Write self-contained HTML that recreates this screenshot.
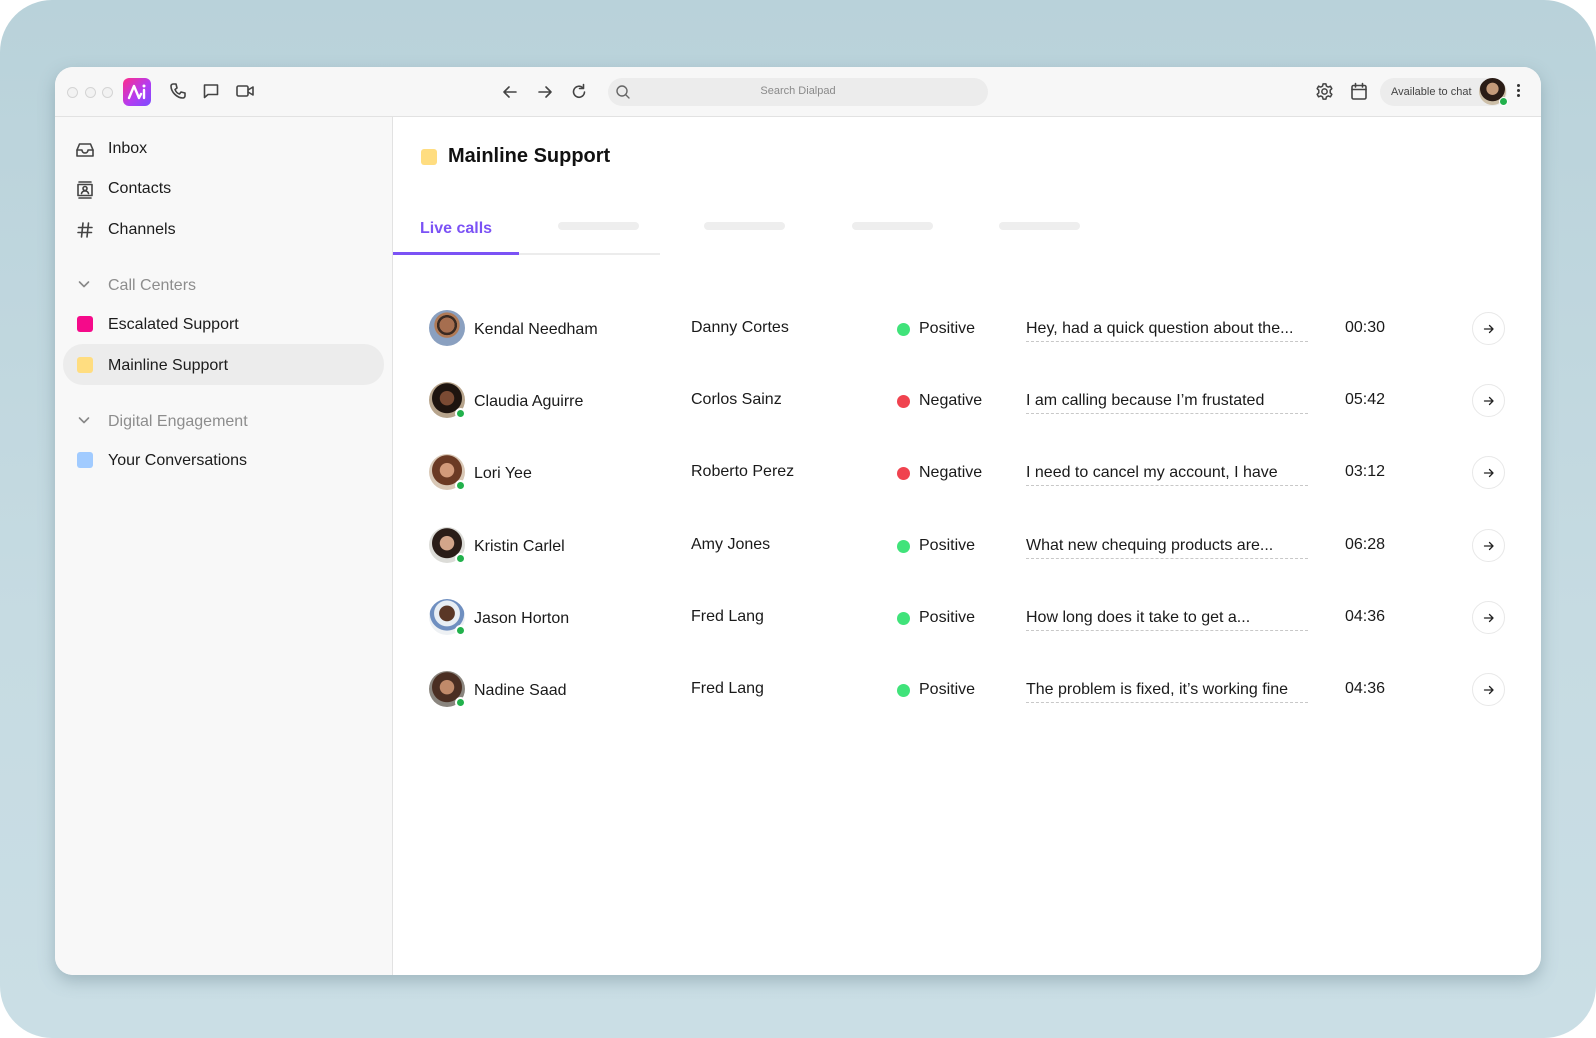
<!DOCTYPE html>
<html><head><meta charset="utf-8"><style>
*{margin:0;padding:0;box-sizing:border-box}
html,body{width:1596px;height:1038px;background:#fff;overflow:hidden;font-family:"Liberation Sans",sans-serif;color:#1a1a1a}
#bg{position:absolute;left:0;top:0;width:1596px;height:1038px;border-radius:52px;background:linear-gradient(180deg,#b9d2da 0%,#c6dbe2 60%,#cadee5 100%)}
#win{position:absolute;left:55px;top:67px;width:1486px;height:908px;border-radius:18px;background:#fff;overflow:hidden;box-shadow:0 6px 16px rgba(80,110,120,.35)}
#tb{position:absolute;left:0;top:0;width:100%;height:50px;background:#f7f7f7;border-bottom:1px solid #e2e2e2}
#side{position:absolute;left:0;top:50px;width:338px;bottom:0;background:#f8f8f8;border-right:1px solid #e2e2e2}
.a{position:absolute}
.tl{position:absolute;top:20px;width:11px;height:11px;border-radius:50%;border:1px solid #d4d4d4;background:#f2f2f2}
svg.i{position:absolute;fill:none;stroke:#444;stroke-width:1.6;stroke-linecap:round;stroke-linejoin:round}
.si{position:absolute;left:53px;font-size:16px;color:#1c1c1c}
.sq{position:absolute;left:22px;width:16px;height:16px;border-radius:3px}
.hd{color:#8d8d8d}
.row{position:absolute;left:0;width:100%;height:40px}
.av{position:absolute;left:374px;top:0;width:36px;height:36px;border-radius:50%}
.pd{position:absolute;right:-1px;bottom:-1px;width:11px;height:11px;border-radius:50%;background:#22b14c;border:2px solid #fff}
.t{position:absolute;font-size:16px;white-space:nowrap}
.dot{position:absolute;left:842px;top:13px;width:13px;height:13px;border-radius:50%}
.tr{position:absolute;left:971px;top:10px;width:282px;font-size:16px;padding-bottom:3px;border-bottom:1.5px dashed #c8c8c8;white-space:nowrap}
.arr{position:absolute;left:1417px;top:2px;width:33px;height:33px;border-radius:50%;border:1px solid #e8e8e8;background:#fff}
.ph{position:absolute;top:155px;width:81px;height:8px;border-radius:4px;background:#eeeeee}
</style></head><body>
<div id="bg"></div>
<div id="win">
 <div id="tb">
  <div class="tl" style="left:12px"></div><div class="tl" style="left:30px"></div><div class="tl" style="left:47px"></div>
  <div class="a" style="left:68px;top:11px;width:28px;height:28px;border-radius:6px;background:linear-gradient(135deg,#ff2d8a 0%,#b43cf0 55%,#7b4dff 100%)">
   <svg width="28" height="28" viewBox="0 0 28 28" style="position:absolute;left:0;top:0"><path d="M6 20 L11 8 L16 20 L18 16" stroke="#fff" stroke-width="2.4" fill="none" stroke-linecap="round" stroke-linejoin="round"/><path d="M21 12 V20" stroke="#fff" stroke-width="2.4" stroke-linecap="round"/><circle cx="21" cy="8" r="1.5" fill="#fff"/></svg>
  </div>
  <svg class="i" style="left:114px;top:15px" width="18" height="18" viewBox="0 0 18 18"><path d="M4 2 L7 2 L8 6 L6 7.5 C7 10 8.5 11.5 10.5 12 L12 10 L16 11 L16 14 C16 15 15 16 14 16 C8 16 2 10 2 4 C2 3 3 2 4 2Z"/></svg>
  <svg class="i" style="left:147px;top:15px" width="18" height="18" viewBox="0 0 18 18"><path d="M2.5 3 H15.5 V12.5 H6 L2.5 15.5 Z"/></svg>
  <svg class="i" style="left:180px;top:15px" width="20" height="18" viewBox="0 0 20 18"><rect x="2" y="4" width="11" height="10" rx="1.5"/><path d="M13 8 L18 5 V13 L13 10"/></svg>
  <svg class="i" style="left:446px;top:16px" width="18" height="18" viewBox="0 0 18 18"><path d="M15 9 H3 M8 4 L3 9 L8 14"/></svg>
  <svg class="i" style="left:481px;top:16px" width="18" height="18" viewBox="0 0 18 18"><path d="M3 9 H15 M10 4 L15 9 L10 14"/></svg>
  <svg class="i" style="left:514px;top:15px" width="20" height="20" viewBox="0 0 20 20"><path d="M15.5 10 A5.5 5.5 0 1 1 13.5 5.5"/><path d="M14.5 2.5 V6.5 H10.5"/></svg>
  <div class="a" style="left:553px;top:11px;width:380px;height:28px;border-radius:14px;background:#ececec">
   <svg class="i" style="left:7px;top:6px;stroke:#666;stroke-width:1.4" width="16" height="16" viewBox="0 0 16 16"><circle cx="7" cy="7" r="5"/><path d="M11 11 L14 14"/></svg>
   <div class="a" style="left:0;width:100%;top:7px;text-align:center;font-size:11px;color:#8a8a8a">Search Dialpad</div>
  </div>
  <svg class="i" style="left:1260px;top:15px" width="19" height="19" viewBox="0 0 20 20"><circle cx="10" cy="10" r="2.8"/><path d="M8.5 2 H11.5 L12 4.3 L14 5.3 L16.2 4.4 L17.7 7 L16 8.6 V11.4 L17.7 13 L16.2 15.6 L14 14.7 L12 15.7 L11.5 18 H8.5 L8 15.7 L6 14.7 L3.8 15.6 L2.3 13 L4 11.4 V8.6 L2.3 7 L3.8 4.4 L6 5.3 L8 4.3 Z"/></svg>
  <svg class="i" style="left:1295px;top:15px" width="18" height="19" viewBox="0 0 18 19"><rect x="2" y="3.5" width="14" height="13.5" rx="1.5"/><path d="M2 7.5 H16 M5.5 1.5 V5 M12.5 1.5 V5"/></svg>
  <div class="a" style="left:1325px;top:11px;width:127px;height:28px;border-radius:14px;background:#ececec">
   <div class="a" style="left:11px;top:8px;font-size:11px;color:#444">Available to chat</div>
  </div>
  <div class="a" style="left:1424px;top:11px;width:27px;height:27px;border-radius:50%;background:radial-gradient(circle at 50% 40%,#c49a7a 0 28%,#2a1c16 30% 58%,#cdbfa8 60%)">
   <div class="a" style="right:-2px;bottom:-1px;width:9px;height:9px;border-radius:50%;background:#22b14c;border:1.5px solid #fff"></div>
  </div>
  <div class="a" style="left:1462px;top:17px;width:3px;height:3px;border-radius:50%;background:#333;box-shadow:0 5px 0 #333,0 10px 0 #333"></div>
 </div>
 <div id="side">
  <svg class="i" style="left:20px;top:24px" width="20" height="18" viewBox="0 0 20 18"><path d="M2 9 L4.5 3 H15.5 L18 9 V15 H2 Z"/><path d="M2 9 H7 C7 11 8.5 12 10 12 C11.5 12 13 11 13 9 H18"/></svg>
  <div class="si" style="top:23px">Inbox</div>
  <svg class="i" style="left:20px;top:63px" width="20" height="20" viewBox="0 0 20 20"><path d="M4 2 H16 M4 18 H16"/><rect x="3" y="4.5" width="14" height="11"/><circle cx="10" cy="8.5" r="2"/><path d="M6.5 13.5 C7 11.5 8.5 11 10 11 C11.5 11 13 11.5 13.5 13.5"/></svg>
  <div class="si" style="top:63px">Contacts</div>
  <svg class="i" style="left:21px;top:104px" width="18" height="18" viewBox="0 0 18 18"><path d="M7 2 L5.5 16 M12.5 2 L11 16 M2.5 6.5 H16 M2 11.5 H15.5"/></svg>
  <div class="si" style="top:104px">Channels</div>
  <svg class="i" style="left:22px;top:160px;stroke:#888" width="14" height="14" viewBox="0 0 14 14"><path d="M2.5 5 L7 9.5 L11.5 5"/></svg>
  <div class="si hd" style="top:160px">Call Centers</div>
  <div class="sq" style="top:199px;background:#f50a8a"></div>
  <div class="si" style="top:199px">Escalated Support</div>
  <div class="a" style="left:8px;top:227px;width:321px;height:41px;border-radius:20px;background:#ececec"></div>
  <div class="sq" style="top:240px;background:#ffdd80"></div>
  <div class="si" style="top:240px">Mainline Support</div>
  <svg class="i" style="left:22px;top:296px;stroke:#888" width="14" height="14" viewBox="0 0 14 14"><path d="M2.5 5 L7 9.5 L11.5 5"/></svg>
  <div class="si hd" style="top:296px">Digital Engagement</div>
  <div class="sq" style="top:335px;background:#a1cbff"></div>
  <div class="si" style="top:335px">Your Conversations</div>
 </div>
 <!-- main -->
 <div class="sq" style="left:366px;top:82px;background:#ffdd80"></div>
 <div class="a" style="left:393px;top:78px;font-size:20px;font-weight:bold;color:#111">Mainline Support</div>
 <div class="a" style="left:365px;top:153px;font-size:16px;font-weight:bold;color:#7b52f5">Live calls</div>
 <div class="a" style="left:338px;top:186px;width:267px;height:2px;background:#ececec"></div>
 <div class="a" style="left:338px;top:185px;width:126px;height:3px;background:#7b52f5"></div>
 <div class="ph" style="left:503px"></div><div class="ph" style="left:649px"></div><div class="ph" style="left:797px"></div><div class="ph" style="left:944px"></div>

 <div class="row" style="top:243px">
  <div class="av" style="background:radial-gradient(circle at 50% 42%,#a66e4f 0 27%,#3a2a22 28% 36%,#b07a56 37% 45%,#8aa0c0 47%)"></div>
  <div class="t" style="left:419px;top:11px">Kendal Needham</div><div class="t" style="left:636px;top:9px">Danny Cortes</div>
  <div class="dot" style="background:#40e37a"></div><div class="t" style="left:864px;top:10px">Positive</div>
  <div class="tr">Hey, had a quick question about the...</div><div class="t" style="left:1290px;top:9px">00:30</div>
  <div class="arr"><svg class="i" style="left:9px;top:9px;stroke:#222;stroke-width:1.3" width="14" height="14" viewBox="0 0 14 14"><path d="M2.5 7 H11 M7.5 3.5 L11 7 L7.5 10.5"/></svg></div>
 </div>
 <div class="row" style="top:315px">
  <div class="av" style="background:radial-gradient(circle at 50% 45%,#7a4a33 0 26%,#1e140f 28% 55%,#b7a48c 57%)"><div class="pd"></div></div>
  <div class="t" style="left:419px;top:11px">Claudia Aguirre</div><div class="t" style="left:636px;top:9px">Corlos Sainz</div>
  <div class="dot" style="background:#f0434f"></div><div class="t" style="left:864px;top:10px">Negative</div>
  <div class="tr">I am calling because I’m frustated</div><div class="t" style="left:1290px;top:9px">05:42</div>
  <div class="arr"><svg class="i" style="left:9px;top:9px;stroke:#222;stroke-width:1.3" width="14" height="14" viewBox="0 0 14 14"><path d="M2.5 7 H11 M7.5 3.5 L11 7 L7.5 10.5"/></svg></div>
 </div>
 <div class="row" style="top:387px">
  <div class="av" style="background:radial-gradient(circle at 50% 45%,#d29a7a 0 26%,#6b3a24 28% 55%,#d9c8b6 57%)"><div class="pd"></div></div>
  <div class="t" style="left:419px;top:11px">Lori Yee</div><div class="t" style="left:636px;top:9px">Roberto Perez</div>
  <div class="dot" style="background:#f0434f"></div><div class="t" style="left:864px;top:10px">Negative</div>
  <div class="tr">I need to cancel my account, I have</div><div class="t" style="left:1290px;top:9px">03:12</div>
  <div class="arr"><svg class="i" style="left:9px;top:9px;stroke:#222;stroke-width:1.3" width="14" height="14" viewBox="0 0 14 14"><path d="M2.5 7 H11 M7.5 3.5 L11 7 L7.5 10.5"/></svg></div>
 </div>
 <div class="row" style="top:460px">
  <div class="av" style="background:radial-gradient(circle at 50% 45%,#d2a58a 0 26%,#2a1d18 28% 55%,#dcdcd8 57%)"><div class="pd"></div></div>
  <div class="t" style="left:419px;top:11px">Kristin Carlel</div><div class="t" style="left:636px;top:9px">Amy Jones</div>
  <div class="dot" style="background:#40e37a"></div><div class="t" style="left:864px;top:10px">Positive</div>
  <div class="tr">What new chequing products are...</div><div class="t" style="left:1290px;top:9px">06:28</div>
  <div class="arr"><svg class="i" style="left:9px;top:9px;stroke:#222;stroke-width:1.3" width="14" height="14" viewBox="0 0 14 14"><path d="M2.5 7 H11 M7.5 3.5 L11 7 L7.5 10.5"/></svg></div>
 </div>
 <div class="row" style="top:532px">
  <div class="av" style="background:radial-gradient(circle at 50% 40%,#5a3726 0 27%,#e8eef4 29% 45%,#6f8fc0 47% 60%,#eef1f4 62%)"><div class="pd"></div></div>
  <div class="t" style="left:419px;top:11px">Jason Horton</div><div class="t" style="left:636px;top:9px">Fred Lang</div>
  <div class="dot" style="background:#40e37a"></div><div class="t" style="left:864px;top:10px">Positive</div>
  <div class="tr">How long does it take to get a...</div><div class="t" style="left:1290px;top:9px">04:36</div>
  <div class="arr"><svg class="i" style="left:9px;top:9px;stroke:#222;stroke-width:1.3" width="14" height="14" viewBox="0 0 14 14"><path d="M2.5 7 H11 M7.5 3.5 L11 7 L7.5 10.5"/></svg></div>
 </div>
 <div class="row" style="top:604px">
  <div class="av" style="background:radial-gradient(circle at 50% 45%,#c08a6a 0 26%,#4a2e22 28% 55%,#8a857e 57%)"><div class="pd"></div></div>
  <div class="t" style="left:419px;top:11px">Nadine Saad</div><div class="t" style="left:636px;top:9px">Fred Lang</div>
  <div class="dot" style="background:#40e37a"></div><div class="t" style="left:864px;top:10px">Positive</div>
  <div class="tr">The problem is fixed, it’s working fine</div><div class="t" style="left:1290px;top:9px">04:36</div>
  <div class="arr"><svg class="i" style="left:9px;top:9px;stroke:#222;stroke-width:1.3" width="14" height="14" viewBox="0 0 14 14"><path d="M2.5 7 H11 M7.5 3.5 L11 7 L7.5 10.5"/></svg></div>
 </div>
</div>
</body></html>
